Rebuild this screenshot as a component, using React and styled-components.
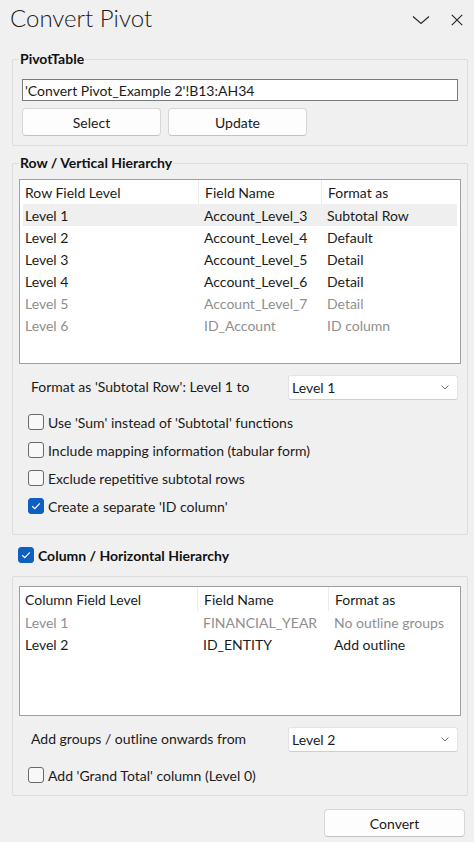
import React from "react";
import styled, { createGlobalStyle } from "styled-components";

const GlobalStyle = createGlobalStyle`
  html, body {
    margin: 0;
    padding: 0;
    background: #f0f0f0;
  }
  body {
    font-family: Lato, "Open Sans", sans-serif;
    font-size: 14px;
    color: #1b1b1b;
  }
`;

const Pane = styled.div`
  width: 474px;
  height: 842px;
  background: #f0f0f0;
  display: flex;
  flex-direction: column;
  box-sizing: border-box;
  overflow: hidden;
`;

const TitleBar = styled.div`
  height: 36px;
  display: flex;
  align-items: center;
  padding: 0 11px 0 10px;
`;

const Title = styled.h1`
  margin: 0;
  font-size: 24px;
  font-weight: 300;
  line-height: 36px;
  color: #1b1b1b;
  flex: 1;
`;

const TitleActions = styled.div`
  display: flex;
  align-items: center;
  gap: 21px;
  padding-top: 4px;
`;

const IconButton = styled.span`
  display: flex;
  align-items: center;
  justify-content: center;
  color: #2b2b2b;
`;

const Group = styled.fieldset`
  box-sizing: border-box;
  width: 456px;
  min-width: 0;
  margin: ${(p) => p.$mt || 0}px 0 0 12px;
  padding: ${(p) => p.$pt || 0}px 6px ${(p) => p.$pb || 0}px;
  border: 1px solid #dcdcdc;
  border-radius: 2px;
`;

const Legend = styled.legend`
  padding: 0 1px;
  font-weight: 700;
  line-height: 14px;
  color: #111;
`;

const SectionHeader = styled.div`
  height: 28px;
  margin: 6px 0 0 18px;
  display: flex;
  align-items: center;
  gap: 4px;
  font-weight: 700;
  color: #111;
`;

const TextInput = styled.input`
  box-sizing: border-box;
  display: block;
  width: 436px;
  height: 22px;
  margin: 0 3px;
  padding: 0 2px;
  border: 1px solid #7a7a7a;
  background: #fff;
  font: inherit;
  color: #1b1b1b;
  outline: none;
`;

const ButtonRow = styled.div`
  display: flex;
  gap: 7px;
  margin: 7px 3px 0;
`;

const Button = styled.button`
  box-sizing: border-box;
  width: ${(p) => p.$w || 139}px;
  height: 28px;
  padding: 0;
  background: #fdfdfd;
  border: 1px solid #d6d6d6;
  border-bottom-color: #c2c2c2;
  border-radius: 4px;
  font: inherit;
  color: #1b1b1b;
`;

const ListBox = styled.div`
  box-sizing: border-box;
  height: ${(p) => p.$h}px;
  border: 1px solid #a0a0a0;
  background: #fff;
  padding: 0 3px;
`;

const HeaderRow = styled.div`
  display: grid;
  grid-template-columns: ${(p) => p.$cols};
  height: 24px;
  align-items: center;
`;

const HeaderCell = styled.div`
  height: 100%;
  display: flex;
  align-items: center;
  padding-left: 6px;
  border-left: 1px solid #ececec;
  &:first-child {
    padding-left: 2px;
    border-left: none;
  }
`;

const Row = styled.div`
  display: grid;
  grid-template-columns: ${(p) => p.$cols};
  height: 22px;
  align-items: center;
  background: ${(p) => (p.$selected ? "#efefef" : "transparent")};
  color: ${(p) => (p.$muted ? "#8f8f8f" : "#1b1b1b")};
`;

const Cell = styled.div`
  padding-left: 6px;
  white-space: nowrap;
  &:first-child {
    padding-left: 2px;
  }
`;

const OptionRow = styled.div`
  display: flex;
  align-items: center;
  height: 24px;
  margin: 11px 3px 0 12px;
`;

const OptionLabel = styled.span`
  flex: 1;
  margin-top: -1px;
`;

const Dropdown = styled.div`
  box-sizing: border-box;
  width: 170px;
  height: 25px;
  display: flex;
  align-items: center;
  justify-content: space-between;
  padding: 0 8px 0 3px;
  background: #fff;
  border: 1px solid #e3e3e3;
  border-bottom-color: #cfcfcf;
  border-radius: 3px;
`;

const CheckList = styled.div`
  margin: ${(p) => p.$mt || 9}px 0 0 9px;
`;

const CheckRow = styled.label`
  display: flex;
  align-items: center;
  gap: 4px;
  height: 28px;
`;

const Box = styled.span`
  box-sizing: border-box;
  width: 16px;
  height: 16px;
  border-radius: 3px;
  flex-shrink: 0;
  display: flex;
  align-items: center;
  justify-content: center;
  background: ${(p) => (p.$checked ? "#0f5fc1" : "#f8f8f8")};
  border: 1px solid ${(p) => (p.$checked ? "#0f5fc1" : "#6a6a6a")};
`;

const Footer = styled.div`
  display: flex;
  justify-content: flex-end;
  padding: 13px 9px 0 0;
`;

const Chevron = () => (
  <svg width="18" height="10" viewBox="0 0 18 10">
    <path d="M1 1.5 L9 8.5 L17 1.5" fill="none" stroke="currentColor" strokeWidth="1.2" />
  </svg>
);

const Close = () => (
  <svg width="12" height="12" viewBox="0 0 12 12">
    <path d="M0.8 0.8 L11.2 11.2 M11.2 0.8 L0.8 11.2" fill="none" stroke="currentColor" strokeWidth="1.2" />
  </svg>
);

const SmallChevron = () => (
  <svg width="8" height="5" viewBox="0 0 8 5">
    <path d="M0.5 0.5 L4 4 L7.5 0.5" fill="none" stroke="#6f6f6f" strokeWidth="1" />
  </svg>
);

const Check = ({ checked }) => (
  <Box $checked={checked}>
    {checked && (
      <svg width="10" height="8" viewBox="0 0 10 8">
        <path d="M1.2 4.2 L3.8 6.6 L8.8 1.4" fill="none" stroke="#fff" strokeWidth="1.2" />
      </svg>
    )}
  </Box>
);

const CheckOption = ({ checked, children }) => (
  <CheckRow>
    <Check checked={checked} />
    <span>{children}</span>
  </CheckRow>
);

const rowCols = "175px 123px 1fr";
const colCols = "174px 131px 1fr";

const rowLevels = [
  ["Level 1", "Account_Level_3", "Subtotal Row", false],
  ["Level 2", "Account_Level_4", "Default", false],
  ["Level 3", "Account_Level_5", "Detail", false],
  ["Level 4", "Account_Level_6", "Detail", false],
  ["Level 5", "Account_Level_7", "Detail", true],
  ["Level 6", "ID_Account", "ID column", true],
];

const colLevels = [
  ["Level 1", "FINANCIAL_YEAR", "No outline groups", true],
  ["Level 2", "ID_ENTITY", "Add outline", false],
];

const LevelList = ({ cols, height, first, rows, selected }) => (
  <ListBox $h={height}>
    <HeaderRow $cols={cols}>
      <HeaderCell>{first}</HeaderCell>
      <HeaderCell>Field Name</HeaderCell>
      <HeaderCell>Format as</HeaderCell>
    </HeaderRow>
    {rows.map(([level, field, format, muted], i) => (
      <Row key={level} $cols={cols} $muted={muted} $selected={i === selected}>
        <Cell>{level}</Cell>
        <Cell>{field}</Cell>
        <Cell>{format}</Cell>
      </Row>
    ))}
  </ListBox>
);

export default function App() {
  return (
    <>
      <GlobalStyle />
      <Pane>
        <TitleBar>
          <Title>Convert Pivot</Title>
          <TitleActions>
            <IconButton><Chevron /></IconButton>
            <IconButton><Close /></IconButton>
          </TitleActions>
        </TitleBar>

        <Group $mt={16} $pt={13} $pb={9}>
          <Legend>PivotTable</Legend>
          <TextInput defaultValue="'Convert Pivot_Example 2'!B13:AH34" readOnly />
          <ButtonRow>
            <Button>Select</Button>
            <Button>Update</Button>
          </ButtonRow>
        </Group>

        <Group $mt={10} $pt={9} $pb={14}>
          <Legend>Row / Vertical Hierarchy</Legend>
          <LevelList cols={rowCols} height={185} first="Row Field Level" rows={rowLevels} selected={0} />
          <OptionRow>
            <OptionLabel>Format as 'Subtotal Row': Level 1 to</OptionLabel>
            <Dropdown>
              <span>Level 1</span>
              <SmallChevron />
            </Dropdown>
          </OptionRow>
          <CheckList>
            <CheckOption>Use 'Sum' instead of 'Subtotal' functions</CheckOption>
            <CheckOption>Include mapping information (tabular form)</CheckOption>
            <CheckOption>Exclude repetitive subtotal rows</CheckOption>
            <CheckOption checked>Create a separate 'ID column'</CheckOption>
          </CheckList>
        </Group>

        <SectionHeader>
          <Check checked />
          <span>Column / Horizontal Hierarchy</span>
        </SectionHeader>

        <Group $mt={7} $pt={9} $pb={6}>
          <LevelList cols={colCols} height={130} first="Column Field Level" rows={colLevels} />
          <OptionRow>
            <OptionLabel>Add groups / outline onwards from</OptionLabel>
            <Dropdown>
              <span>Level 2</span>
              <SmallChevron />
            </Dropdown>
          </OptionRow>
          <CheckList $mt={10}>
            <CheckOption>Add 'Grand Total' column (Level 0)</CheckOption>
          </CheckList>
        </Group>

        <Footer>
          <Button $w={141}>Convert</Button>
        </Footer>
      </Pane>
    </>
  );
}
